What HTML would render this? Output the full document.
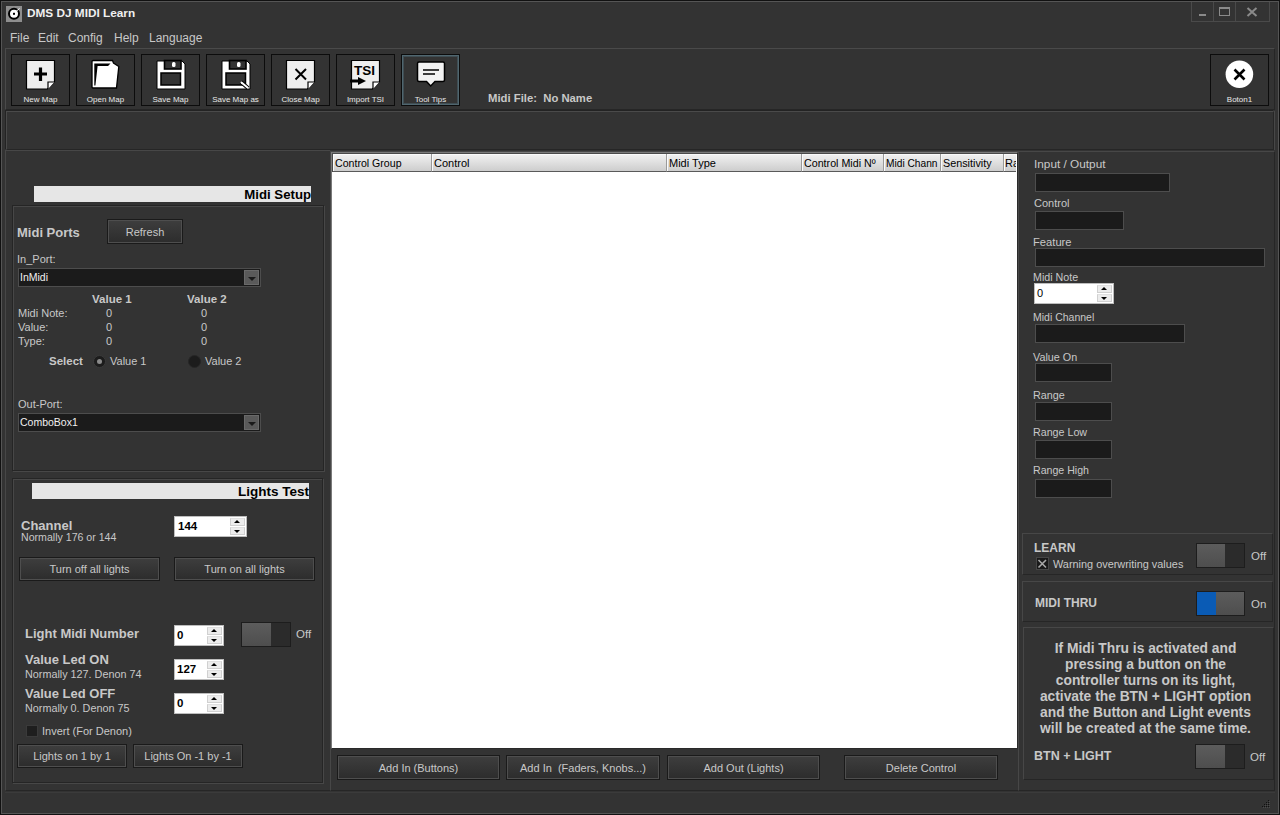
<!DOCTYPE html>
<html><head><meta charset="utf-8">
<style>
*{box-sizing:border-box;margin:0;padding:0}
html,body{width:1280px;height:815px;overflow:hidden;background:#000}
body{position:relative;font-family:"Liberation Sans",sans-serif;color:#c8c8c8;font-size:11px}
.a{position:absolute}
.win{position:absolute;left:0;top:0;width:1280px;height:815px;background:#333;border:1px solid #111;}
.win:before{content:"";position:absolute;left:0;top:0;right:0;bottom:0;border:1px solid #555;pointer-events:none}
.t{position:absolute;white-space:nowrap;line-height:1}
.b{font-weight:bold}
.panel{position:absolute;border:1px solid #4a4a4a;border-right-color:#262626;border-bottom-color:#262626}
.tb{position:absolute;background:#1b1b1b;border:1px solid #4d4d4d}
.btn{position:absolute;border:1px solid #1a1a1a;background:linear-gradient(#3e3e3e,#2c2c2c);box-shadow:inset 0 0 0 1px #4e4e4e;color:#c8c8c8;text-align:center;font-size:11px}
.btn span{position:absolute;left:0;right:0;top:50%;transform:translateY(-50%);line-height:1}
.tbtn{position:absolute;width:59px;height:52px;border:1px solid #0c0c0c;background:#333}
.tbtn .lbl{position:absolute;left:0;right:0;bottom:1px;text-align:center;font-size:8px;color:#e8e8e8;line-height:1;white-space:nowrap}
.wbar{position:absolute;background:#e6e6e6;color:#000;font-weight:bold;text-align:right}
.spin{position:absolute;background:#fff;border:1px solid #9a9a9a;color:#000}
.spin{border-color:#bdbdbd}
.spin .up,.spin .dn{position:absolute;right:1px;width:15px;height:8px;background:#ececec;border:1px solid #d0d0d0;border-top-color:#e0e0e0}
.spin .up:after,.spin .dn:after{content:"";position:absolute;left:3px;border-left:3px solid transparent;border-right:3px solid transparent}
.spin .up:after{top:1px;border-bottom:3px solid #000}
.spin .dn:after{top:2px;border-top:3px solid #000}
.tog{position:absolute;width:49px;height:25px;background:#2b2b2b;border:1px solid #1d1d1d}
.tog .k{position:absolute;left:0;top:0;bottom:0;width:28px;background:linear-gradient(#5c5c5c,#4e4e4e)}
.combo{position:absolute;background:#1b1b1b;border:1px solid #4d4d4d;color:#e0e0e0}
.combo .dd{position:absolute;right:1px;top:1px;bottom:1px;width:15px;background:#5a5a5a;border:1px solid #6a6a6a}
.combo .dd:after{content:"";position:absolute;left:3px;top:6px;border-left:4px solid transparent;border-right:4px solid transparent;border-top:4px solid #1a1a1a}

.grp{position:absolute;border:1px solid #252525;box-shadow:inset 1px 1px 0 #474747,1px 1px 0 #474747}
.pnl{position:absolute;border:1px solid;border-color:#474747 #262626 #262626 #474747}
.rad{position:absolute;width:13px;height:13px;border-radius:50%;background:#1c1c1c;border:1px solid #3a3a3a}
.chk{position:absolute;width:12px;height:12px;background:#1e1e1e;border:1px solid #3a3a3a}

.hdr{position:absolute;top:0;height:18px;background:linear-gradient(#f2f2f2,#cdcdcd);border-right:1px solid #9a9a9a;border-bottom:1px solid #5a5a5a;box-shadow:inset 1px 1px 0 #fafafa;color:#000;font-size:11px}
.hdr span{position:absolute;left:2px;top:4px;white-space:nowrap;line-height:1}
</style></head><body>
<div class="win">
</div>
<!-- title bar -->
<div class="a" style="left:6px;top:6px;width:16px;height:16px;background:#8e8e8e"></div>
<svg class="a" style="left:6px;top:6px" width="16" height="16" viewBox="0 0 16 16"><circle cx="8" cy="7.8" r="5" fill="#fff" stroke="#000" stroke-width="2"/><rect x="7" y="6.8" width="2" height="2" fill="#000"/><path d="M10 5.5 L13.5 2.5" stroke="#fff" stroke-width="1"/></svg>
<div class="t b" style="left:27px;top:8px;font-size:11.8px;color:#f0f0f0">DMS DJ MIDI Learn</div>
<div class="a" style="left:1191px;top:2px;width:79px;height:20px;border:1px solid #4a4a4a;border-top:none"></div>
<div class="a" style="left:1213px;top:2px;width:1px;height:19px;background:#4a4a4a"></div>
<div class="a" style="left:1235px;top:2px;width:1px;height:19px;background:#4a4a4a"></div>
<div class="a" style="left:1199px;top:14px;width:7px;height:2px;background:#8a8a8a"></div>
<div class="a" style="left:1219px;top:7px;width:11px;height:9px;border:1px solid #8a8a8a;border-top-width:2px"></div>
<svg class="a" style="left:1246px;top:7px" width="12" height="10" viewBox="0 0 12 10"><path d="M1.5 1 L10.5 9 M10.5 1 L1.5 9" stroke="#8a8a8a" stroke-width="2"/></svg>
<!-- menu -->
<div class="t" style="left:10px;top:32px;font-size:12px">File</div>
<div class="t" style="left:38px;top:32px;font-size:12px">Edit</div>
<div class="t" style="left:68px;top:32px;font-size:12px">Config</div>
<div class="t" style="left:114px;top:32px;font-size:12px">Help</div>
<div class="t" style="left:149px;top:32px;font-size:12px">Language</div>
<!-- toolbar panel -->
<div class="panel" style="left:5px;top:48px;width:1270px;height:62px"></div>
<div class="panel" style="left:6px;top:111px;width:1268px;height:39px;box-shadow:-1px -1px 0 #232323,1px 0 0 #474747"></div>


<!-- toolbar buttons -->
<div class="tbtn" style="left:11px;top:54px"><div class="lbl">New Map</div></div>
<div class="tbtn" style="left:76px;top:54px"><div class="lbl">Open Map</div></div>
<div class="tbtn" style="left:141px;top:54px"><div class="lbl">Save Map</div></div>
<div class="tbtn" style="left:206px;top:54px"><div class="lbl">Save Map as</div></div>
<div class="tbtn" style="left:271px;top:54px"><div class="lbl">Close Map</div></div>
<div class="tbtn" style="left:336px;top:54px"><div class="lbl">Import TSI</div></div>
<div class="tbtn" style="left:401px;top:54px;box-shadow:inset 0 0 0 1px #50666f,inset 0 0 0 2px #3f4d53"><div class="lbl">Tool Tips</div></div>
<svg class="a" style="left:0;top:0" width="470" height="110" viewBox="0 0 470 110">
<path d="M26.5 60.5 H54.5 V82 L47.5 89 H26.5 Z" fill="#eeeeee" stroke="#000" stroke-width="1.2"/><path d="M54.5 82 H48 V89" fill="#fff" stroke="#000" stroke-width="1.2"/>
<path d="M40.5 67.5 V81 M34 74 H47" stroke="#000" stroke-width="3.2"/>
<!-- open folder -->
<path d="M92 61.5 Q92 60.5 93 60.5 H112.5 L113.5 63 L118.8 66.5 L116.5 88 H93 Q92 88 92 87 Z" fill="#fff" stroke="#000" stroke-width="1.3"/>
<path d="M94.3 63.4 H110.5 L108 65.9 H97.6 L95.4 85.5 H94.3 Z" fill="#000"/>
<!-- floppy -->
<path d="M157 61 H182 L185 64 V89 H157 Z" fill="#fff" stroke="#000" stroke-width="1"/>
<rect x="164.5" y="60.5" width="16.5" height="8.5" fill="#333" stroke="#000" stroke-width="1.6"/>
<rect x="172" y="62" width="3.5" height="5" rx="1.5" fill="#fff"/>
<rect x="161" y="73" width="19.5" height="12" fill="#333" stroke="#000" stroke-width="1.5"/>
<path d="M222 61 H247 L250 64 V89 H222 Z" fill="#fff" stroke="#000" stroke-width="1"/>
<rect x="229.5" y="60.5" width="16.5" height="8.5" fill="#333" stroke="#000" stroke-width="1.6"/>
<rect x="237" y="62" width="3.5" height="5" rx="1.5" fill="#fff"/>
<rect x="226" y="73" width="19.5" height="12" fill="#333" stroke="#000" stroke-width="1.5"/>
<path d="M241 82 L248 88" stroke="#000" stroke-width="4"/><path d="M241.5 82.5 L247.5 87.5" stroke="#fff" stroke-width="2" stroke-linecap="round"/>
<path d="M286.5 60.5 H314.5 V82 L307.5 89 H286.5 Z" fill="#eeeeee" stroke="#000" stroke-width="1.2"/><path d="M314.5 82 H308 V89" fill="#fff" stroke="#000" stroke-width="1.2"/>
<path d="M295.5 69 L306 79.5 M306 69 L295.5 79.5" stroke="#000" stroke-width="2"/>
<path d="M351.5 60.5 H379.5 V82 L372.5 89 H351.5 Z" fill="#eeeeee" stroke="#000" stroke-width="1.2"/><path d="M379.5 82 H373 V89" fill="#fff" stroke="#000" stroke-width="1.2"/>
<text x="364.5" y="75" text-anchor="middle" font-family="Liberation Sans" font-weight="bold" font-size="13.5" fill="#000">TSI</text>
<path d="M350 81 H360" stroke="#000" stroke-width="3"/><path d="M358 77 L366 81 L358 85 Z" fill="#000"/>
<!-- tooltip bubble -->
<path d="M419 62 H443 Q444.5 62 444.5 63.5 V80 Q444.5 81.5 443 81.5 H435 L430.7 86 L426.5 81.5 H419 Q417.5 81.5 417.5 80 V63.5 Q417.5 62 419 62 Z" fill="#f2f2f2" stroke="#000" stroke-width="1.5"/>
<path d="M423 70 H439 M423 74 H435" stroke="#000" stroke-width="1.6"/>
</svg>
<div class="t b" style="left:488px;top:93px;font-size:11.3px;color:#c8c8c8">Midi File:&nbsp; No Name</div>
<!-- Boton1 -->
<div class="tbtn" style="left:1210px;top:54px;width:59px"><div class="lbl">Boton1</div></div>
<svg class="a" style="left:1222px;top:57px" width="36" height="36" viewBox="0 0 36 36"><circle cx="17.4" cy="17.3" r="13.8" fill="#fff"/><path d="M12.5 12.5 L22.5 22.5 M22.5 12.5 L12.5 22.5" stroke="#000" stroke-width="2.6"/></svg>

<!-- LEFT PANEL -->
<div class="pnl" style="left:5px;top:150px;width:326px;height:641px"></div>
<div class="wbar" style="left:34px;top:186px;width:277px;height:16px"><span class="t" style="right:0;top:2px;font-size:13.2px">Midi Setup</span></div>
<div class="grp" style="left:12px;top:205px;width:312px;height:266px"></div>
<div class="t b" style="left:17px;top:226px;font-size:13px;color:#c8c8c8">Midi Ports</div>
<div class="btn" style="left:107px;top:219px;width:76px;height:25px"><span>Refresh</span></div>
<div class="t" style="left:17px;top:254px;font-size:11px">In_Port:</div>
<div class="combo" style="left:18px;top:268px;width:243px;height:19px"><span class="t" style="left:1px;top:3px;font-size:10.5px;color:#f0f0f0">InMidi</span><div class="dd"></div></div>
<div class="t b" style="left:92px;top:294px;font-size:11.5px">Value 1</div>
<div class="t b" style="left:187px;top:294px;font-size:11.5px">Value 2</div>
<div class="t" style="left:18px;top:308px;font-size:11px">Midi Note:</div>
<div class="t" style="left:18px;top:322px;font-size:11px">Value:</div>
<div class="t" style="left:18px;top:336px;font-size:11px">Type:</div>
<div class="t" style="left:106px;top:308px;font-size:11px">0</div>
<div class="t" style="left:106px;top:322px;font-size:11px">0</div>
<div class="t" style="left:106px;top:336px;font-size:11px">0</div>
<div class="t" style="left:201px;top:308px;font-size:11px">0</div>
<div class="t" style="left:201px;top:322px;font-size:11px">0</div>
<div class="t" style="left:201px;top:336px;font-size:11px">0</div>
<div class="t b" style="left:49px;top:356px;font-size:11.5px">Select</div>
<div class="rad" style="left:93px;top:355px"></div><div class="a" style="left:97px;top:359px;width:5px;height:5px;border-radius:50%;background:#8a8a8a"></div>
<div class="t" style="left:110px;top:356px;font-size:11px">Value 1</div>
<div class="rad" style="left:188px;top:355px;border-color:#262626"></div>
<div class="t" style="left:205px;top:356px;font-size:11px">Value 2</div>
<div class="t" style="left:18px;top:399px;font-size:11px">Out-Port:</div>
<div class="combo" style="left:18px;top:413px;width:243px;height:19px"><span class="t" style="left:1px;top:3px;font-size:10.5px;color:#f0f0f0">ComboBox1</span><div class="dd"></div></div>

<div class="wbar" style="left:32px;top:483px;width:277px;height:16px"><span class="t" style="right:0;top:2px;font-size:13.5px">Lights Test</span></div>
<div class="grp" style="left:12px;top:478px;width:311px;height:305px"></div>
<div class="t b" style="left:21px;top:519px;font-size:13px">Channel</div>
<div class="t" style="left:21px;top:532px;font-size:10.6px">Normally 176 or 144</div>
<div class="spin" style="left:174px;top:516px;width:73px;height:21px"><span class="t b" style="left:3px;top:4px;font-size:11.5px">144</span><div class="up" style="top:1px"></div><div class="dn" style="top:10px"></div></div>
<div class="btn" style="left:19px;top:557px;width:141px;height:24px"><span>Turn off all lights</span></div>
<div class="btn" style="left:174px;top:557px;width:141px;height:24px"><span>Turn on all lights</span></div>
<div class="t b" style="left:25px;top:627px;font-size:13px">Light Midi Number</div>
<div class="spin" style="left:174px;top:625px;width:50px;height:21px"><span class="t b" style="left:2px;top:4px;font-size:11.5px">0</span><div class="up" style="top:1px"></div><div class="dn" style="top:10px"></div></div>
<div class="tog" style="left:241px;top:622px;width:50px"><div class="k" style="width:29px"></div></div>
<div class="t" style="left:296px;top:629px;font-size:11.5px">Off</div>
<div class="t b" style="left:25px;top:653px;font-size:13px">Value Led ON</div>
<div class="t" style="left:25px;top:669px;font-size:10.8px">Normally 127. Denon 74</div>
<div class="spin" style="left:174px;top:659px;width:50px;height:21px"><span class="t b" style="left:2px;top:4px;font-size:11.5px">127</span><div class="up" style="top:1px"></div><div class="dn" style="top:10px"></div></div>
<div class="t b" style="left:25px;top:687px;font-size:13px">Value Led OFF</div>
<div class="t" style="left:25px;top:703px;font-size:10.8px">Normally 0. Denon 75</div>
<div class="spin" style="left:174px;top:693px;width:50px;height:21px"><span class="t b" style="left:2px;top:4px;font-size:11.5px">0</span><div class="up" style="top:1px"></div><div class="dn" style="top:10px"></div></div>
<div class="chk" style="left:26px;top:725px"></div>
<div class="t" style="left:42px;top:726px;font-size:11px">Invert (For Denon)</div>
<div class="btn" style="left:17px;top:744px;width:110px;height:24px"><span>Lights on 1 by 1</span></div>
<div class="btn" style="left:133px;top:744px;width:110px;height:24px"><span>Lights On -1 by -1</span></div>

<!-- CENTER PANEL -->
<div class="pnl" style="left:330px;top:151px;width:689px;height:640px"></div>
<div class="a" style="left:331px;top:152px;width:687px;height:597px;background:#fff;border:1px solid #7a7a7a;border-right-color:#2a2a2a;border-bottom-color:#2a2a2a"></div>
<div class="a" style="left:332px;top:153px;width:685px;height:19px;border:1px solid #4a4a4a;border-right:none;border-bottom:none"></div>
<div class="a" style="left:333px;top:154px;width:683px;height:18px;overflow:hidden">
<div class="hdr" style="left:0;width:99px"><span style="font-size:10.6px">Control Group</span></div>
<div class="hdr" style="left:99px;width:235px"><span>Control</span></div>
<div class="hdr" style="left:334px;width:135px"><span>Midi Type</span></div>
<div class="hdr" style="left:469px;width:82px"><span style="font-size:10.7px">Control Midi Nº</span></div>
<div class="hdr" style="left:551px;width:57px"><span style="font-size:10.2px;top:5px">Midi Chann</span></div>
<div class="hdr" style="left:608px;width:63px"><span style="font-size:10.8px">Sensitivity</span></div>
<div class="hdr" style="left:671px;width:60px"><span style="left:1px">Range</span></div>
</div>
<div class="btn" style="left:337px;top:755px;width:163px;height:25px"><span>Add In (Buttons)</span></div>
<div class="btn" style="left:506px;top:755px;width:154px;height:25px"><span>Add In&nbsp; (Faders, Knobs...)</span></div>
<div class="btn" style="left:667px;top:755px;width:153px;height:25px"><span>Add Out (Lights)</span></div>
<div class="btn" style="left:844px;top:755px;width:154px;height:25px"><span>Delete Control</span></div>

<!-- RIGHT PANEL -->
<div class="pnl" style="left:1018px;top:151px;width:257px;height:640px"></div>
<div class="t" style="left:1034px;top:159px;font-size:11.8px">Input / Output</div>
<div class="tb" style="left:1035px;top:173px;width:135px;height:19px"></div>
<div class="t" style="left:1034px;top:198px;font-size:11px">Control</div>
<div class="tb" style="left:1035px;top:211px;width:89px;height:19px"></div>
<div class="t" style="left:1033px;top:237px;font-size:11.2px">Feature</div>
<div class="tb" style="left:1035px;top:248px;width:230px;height:19px"></div>
<div class="t" style="left:1033px;top:272px;font-size:10.7px">Midi Note</div>
<div class="spin" style="left:1034px;top:283px;width:80px;height:21px"><span class="t" style="left:2px;top:4px;font-size:11px">0</span><div class="up" style="top:1px"></div><div class="dn" style="top:10px"></div></div>
<div class="t" style="left:1033px;top:312px;font-size:10.5px">Midi Channel</div>
<div class="tb" style="left:1035px;top:324px;width:150px;height:19px"></div>
<div class="t" style="left:1033px;top:352px;font-size:10.8px">Value On</div>
<div class="tb" style="left:1035px;top:363px;width:77px;height:19px"></div>
<div class="t" style="left:1033px;top:390px;font-size:10.8px">Range</div>
<div class="tb" style="left:1035px;top:402px;width:77px;height:19px"></div>
<div class="t" style="left:1033px;top:427px;font-size:10.7px">Range Low</div>
<div class="tb" style="left:1035px;top:440px;width:77px;height:19px"></div>
<div class="t" style="left:1033px;top:465px;font-size:10.6px">Range High</div>
<div class="tb" style="left:1035px;top:479px;width:77px;height:19px"></div>

<div class="pnl" style="left:1022px;top:533px;width:251px;height:42px"></div>
<div class="t b" style="left:1034px;top:542px;font-size:12px">LEARN</div>
<div class="chk" style="left:1036px;top:557px;width:13px;height:13px;border-color:#464646;background:#191919"></div>
<svg class="a" style="left:1036px;top:557px" width="13" height="13"><path d="M2.5 3 L10 10.5 M10 3 L2.5 10.5" stroke="#a8a8a8" stroke-width="1.6"/></svg>
<div class="t" style="left:1053px;top:559px;font-size:10.9px">Warning overwriting values</div>
<div class="tog" style="left:1196px;top:543px"><div class="k"></div></div>
<div class="t" style="left:1251px;top:551px;font-size:11.5px">Off</div>

<div class="pnl" style="left:1022px;top:581px;width:251px;height:41px"></div>
<div class="t b" style="left:1035px;top:597px;font-size:12px">MIDI THRU</div>
<div class="tog" style="left:1196px;top:591px;background:#0a5bb5"><div class="k" style="left:19px;width:28px"></div></div>
<div class="t" style="left:1251px;top:599px;font-size:11.5px">On</div>

<div class="pnl" style="left:1023px;top:627px;width:251px;height:153px"></div>
<div class="a b" style="left:1023px;top:641px;width:245px;text-align:center;font-size:13.8px;line-height:16px;color:#c8c8c8">If Midi Thru is activated and<br>pressing a button on the<br>controller turns on its light,<br>activate the BTN + LIGHT option<br>and the Button and Light events<br>will be created at the same time.</div>
<div class="t b" style="left:1034px;top:750px;font-size:12.5px">BTN + LIGHT</div>
<div class="tog" style="left:1195px;top:744px;width:50px"><div class="k" style="width:29px"></div></div>
<div class="t" style="left:1250px;top:752px;font-size:11.5px">Off</div>

<!-- status bar -->
<div class="a" style="left:5px;top:792px;width:1270px;height:1px;background:#3b3b3b"></div>
<svg class="a" style="left:0;top:0" width="1280" height="815"><rect x="1268" y="800" width="1" height="1" fill="#111"/><rect x="1269" y="801" width="1" height="1" fill="#4a4a4a"/><rect x="1266" y="802" width="1" height="1" fill="#111"/><rect x="1267" y="803" width="1" height="1" fill="#4a4a4a"/><rect x="1268" y="802" width="1" height="1" fill="#111"/><rect x="1269" y="803" width="1" height="1" fill="#4a4a4a"/><rect x="1264" y="804" width="1" height="1" fill="#111"/><rect x="1265" y="805" width="1" height="1" fill="#4a4a4a"/><rect x="1266" y="804" width="1" height="1" fill="#111"/><rect x="1267" y="805" width="1" height="1" fill="#4a4a4a"/><rect x="1268" y="804" width="1" height="1" fill="#111"/><rect x="1269" y="805" width="1" height="1" fill="#4a4a4a"/><rect x="1262" y="806" width="1" height="1" fill="#111"/><rect x="1263" y="807" width="1" height="1" fill="#4a4a4a"/><rect x="1264" y="806" width="1" height="1" fill="#111"/><rect x="1265" y="807" width="1" height="1" fill="#4a4a4a"/><rect x="1266" y="806" width="1" height="1" fill="#111"/><rect x="1267" y="807" width="1" height="1" fill="#4a4a4a"/><rect x="1268" y="806" width="1" height="1" fill="#111"/><rect x="1269" y="807" width="1" height="1" fill="#4a4a4a"/></svg>
</body></html>
